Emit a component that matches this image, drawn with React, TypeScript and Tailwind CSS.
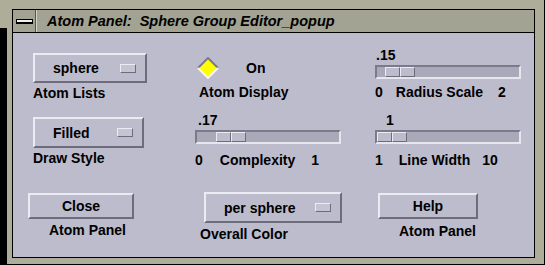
import React from 'react';

// Motif-style "Atom Panel" popup

const raised =
  'border-2 border-t-[#ebebf3] border-l-[#ebebf3] border-b-[#6c6c7c] border-r-[#6c6c7c]';

function OptionMenu({ label, w, h }: { label: string; w: string; h: string }) {
  return (
    <div className={`${w} ${h} ${raised} bg-[#bcbccc] flex items-center justify-between pl-[18px] pr-[9px]`}>
      <span className="text-[14px] font-bold leading-4">{label}</span>
      <div className="w-[16px] h-[9px] border border-t-[#ebebf3] border-l-[#ebebf3] border-b-[#6c6c7c] border-r-[#6c6c7c] bg-[#c4c4d2]" />
    </div>
  );
}

function PushButton({ label, w }: { label: string; w: string }) {
  return (
    <div className={`${w} h-[26px] ${raised} bg-[#bcbccc] flex items-center justify-center`}>
      <span className="text-[14px] font-bold leading-4">{label}</span>
    </div>
  );
}

function Slider({ thumb }: { thumb: string }) {
  return (
    <div className="w-[146px] h-[14px] border-2 border-t-[#7a7a8a] border-l-[#7a7a8a] border-b-[#e6e6ee] border-r-[#e6e6ee] bg-[#a9a9b9] flex items-center">
      <div className={`${thumb} flex`}>
        <div className="w-[15px] h-[10px] border border-t-[#ebebf3] border-l-[#ebebf3] border-b-[#6c6c7c] border-r-[#6c6c7c] bg-[#bcbccc]" />
        <div className="w-[15px] h-[10px] border border-t-[#ebebf3] border-l-[#ebebf3] border-b-[#6c6c7c] border-r-[#6c6c7c] bg-[#bcbccc]" />
      </div>
    </div>
  );
}

function Diamond() {
  return (
    <svg width="22" height="22" viewBox="0 0 22 22">
      <polygon points="11,1 21,11 11,21 1,11" fill="#ffff00" />
      <polyline points="1,11 11,1 21,11" fill="none" stroke="#7a7a8a" strokeWidth="2" />
      <polyline points="1,11 11,21 21,11" fill="none" stroke="#f4f4f8" strokeWidth="2" />
    </svg>
  );
}

export default function App() {
  return (
    <div className="relative w-[545px] h-[265px] bg-[#adad99] pt-[9px] pl-[12px] pr-[9px] pb-[6px] border-r border-b border-black font-['Liberation_Sans',Arial,sans-serif] text-black overflow-hidden">
      <div className="h-full border border-black flex flex-col">
        {/* TITLE BAR */}
        <div className="h-[23px] bg-[#a3a393] border-b border-black flex items-center">
          <div className="w-[23px] h-full border-r border-r-[#55554a] flex items-center justify-center">
            <div className="w-[17px] h-[5px] border border-black bg-[#f2f2ea] border-b-2" />
          </div>
          <div className="w-px h-full bg-[#d4d4c4]" />
          <span className="ml-[10px] text-[14.5px] font-bold italic leading-4 whitespace-pre">
            Atom Panel:  Sphere Group Editor_popup
          </span>
        </div>

        {/* PANEL */}
        <div className="flex-1 bg-[#bcbccc] grid grid-cols-[167px_180px_1fr] grid-rows-[65px_78px_1fr] pt-[14px] pl-[15px] text-[14px] font-bold leading-4">
          {/* row 1 */}
          <div className="flex flex-col items-start pl-[5px]">
            <div className="mt-[6px]">
              <OptionMenu label="sphere" w="w-[114px]" h="h-[30px]" />
            </div>
            <span className="mt-[2px]">Atom Lists</span>
          </div>
          <div className="flex flex-col items-start">
            <div className="mt-[10px] ml-[2px] flex items-start">
              <Diamond />
              <span className="ml-[27px] mt-[3px]">On</span>
            </div>
            <span className="mt-[5px] ml-[4px]">Atom Display</span>
          </div>
          <div className="flex flex-col items-start">
            <span className="ml-[1px]">.15</span>
            <div className="mt-[2px]">
              <Slider thumb="ml-[8px]" />
            </div>
            <div className="mt-[5px] flex">
              <span>0</span>
              <span className="ml-[13px]">Radius Scale</span>
              <span className="ml-[15px]">2</span>
            </div>
          </div>

          {/* row 2 */}
          <div className="flex flex-col items-start pl-[5px]">
            <div className="mt-[5px]">
              <OptionMenu label="Filled" w="w-[111px]" h="h-[31px]" />
            </div>
            <span className="mt-[2px]">Draw Style</span>
          </div>
          <div className="flex flex-col items-start">
            <span className="ml-[3px]">.17</span>
            <div className="mt-[2px]">
              <Slider thumb="ml-[19px]" />
            </div>
            <div className="mt-[8px] flex">
              <span>0</span>
              <span className="ml-[17px]">Complexity</span>
              <span className="ml-[16px]">1</span>
            </div>
          </div>
          <div className="flex flex-col items-start">
            <span className="ml-[11px]">1</span>
            <div className="mt-[2px]">
              <Slider thumb="ml-0" />
            </div>
            <div className="mt-[8px] flex">
              <span>1</span>
              <span className="ml-[16px]">Line Width</span>
              <span className="ml-[12px]">10</span>
            </div>
          </div>

          {/* row 3 */}
          <div className="flex flex-col items-start">
            <div className="mt-[3px]">
              <PushButton label="Close" w="w-[106px]" />
            </div>
            <span className="mt-[3px] ml-[21px]">Atom Panel</span>
          </div>
          <div className="flex flex-col items-start">
            <div className="mt-[2px] ml-[9px]">
              <OptionMenu label="per sphere" w="w-[138px]" h="h-[31px]" />
            </div>
            <span className="mt-[3px] ml-[5px]">Overall Color</span>
          </div>
          <div className="flex flex-col items-start">
            <div className="mt-[3px] ml-[3px]">
              <PushButton label="Help" w="w-[100px]" />
            </div>
            <span className="mt-[4px] ml-[24px]">Atom Panel</span>
          </div>
        </div>
      </div>

      {/* dark strip at the window's left edge */}
      <div className="absolute left-0 top-[28px] bottom-0 w-[7px] bg-black" />
    </div>
  );
}
